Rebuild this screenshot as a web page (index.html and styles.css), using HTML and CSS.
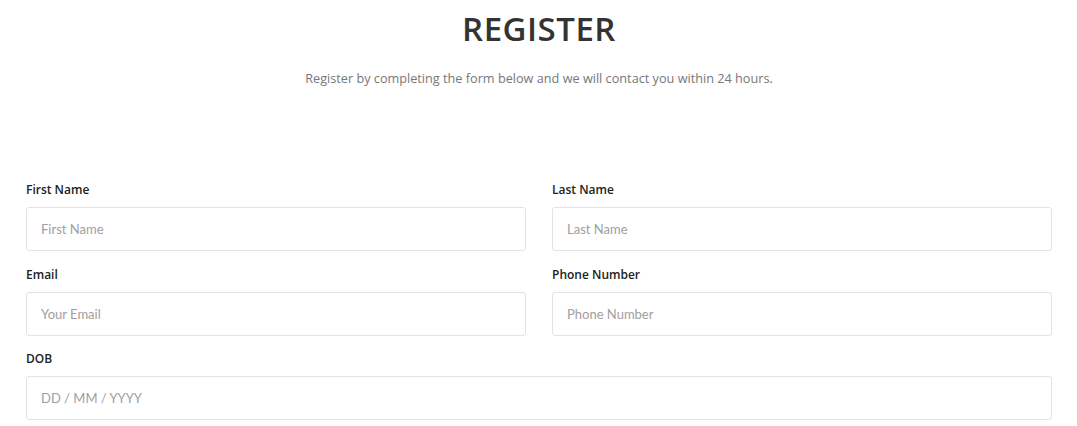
FILE: index.html
```html
<!DOCTYPE html>
<html lang="en">
<head>
    <meta charset="UTF-8">
    <meta name="viewport" content="width=device-width, initial-scale=1.0">
    <title>Register</title>
    <link rel="stylesheet" href="styles.css">
</head>
<body>
    <div class="register">
        <h1>REGISTER</h1>
        <p class="intro">Register by completing the form below and we will contact you within 24 hours.</p>

        <form class="form">
            <div class="field">
                <label for="firstName">First Name</label>
                <input type="text" id="firstName" placeholder="First Name">
            </div>
            <div class="field">
                <label for="lastName">Last Name</label>
                <input type="text" id="lastName" placeholder="Last Name">
            </div>
            <div class="field">
                <label for="email">Email</label>
                <input type="email" id="email" placeholder="Your Email">
            </div>
            <div class="field">
                <label for="phone">Phone Number</label>
                <input type="text" id="phone" placeholder="Phone Number">
            </div>
            <div class="field full">
                <label for="dob">DOB</label>
                <input type="text" id="dob" placeholder="DD / MM / YYYY">
            </div>
        </form>
    </div>
</body>
</html>
```

FILE: styles.css
```css
body {
    font-family: 'Open Sans', sans-serif;
    background-color: #ffffff;
    margin: 0;
    padding: 0;
}

.register {
    padding: 0 25px 0 26px;
}

h1 {
    color: #333;
    font-family: 'Open Sans', sans-serif;
    font-weight: 600;
    font-size: 33px;
    letter-spacing: 0.5px;
    text-align: center;
    margin: 0;
    padding-top: 7px;
    line-height: 44px;
}

.intro {
    color: #777;
    font-size: 12.7px;
    text-align: center;
    margin: 18px 0 0;
    line-height: 18px;
}

.form {
    display: grid;
    grid-template-columns: 1fr 1fr;
    column-gap: 26px;
    row-gap: 15px;
    margin-top: 94px;
}

.field {
    display: flex;
    flex-direction: column;
}

.field.full {
    grid-column: 1 / -1;
    margin-top: -1px;
}

label {
    color: #222;
    font-size: 12px;
    font-weight: 600;
    line-height: 18px;
    margin-bottom: 8px;
}

input {
    height: 44px;
    box-sizing: border-box;
    border: 1px solid #e3e3e3;
    border-radius: 3px;
    padding: 0 14px;
    font-family: 'Lato', sans-serif;
    font-size: 13px;
    color: #333;
    outline: none;
}

input::placeholder {
    color: #a0a0a0;
}
```
